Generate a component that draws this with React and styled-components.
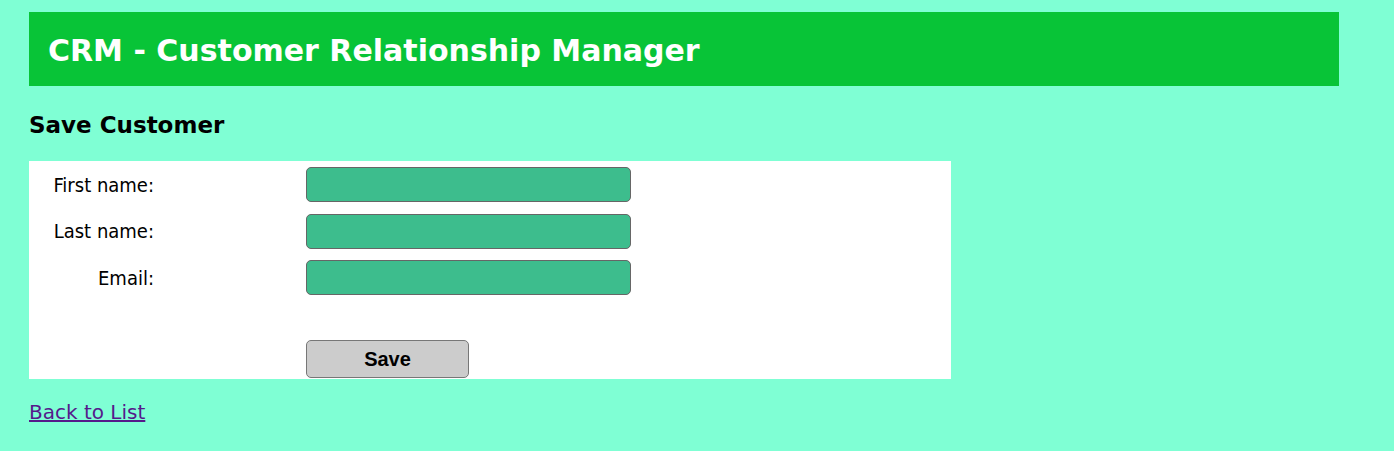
import React from "react";
import styled, { createGlobalStyle } from "styled-components";

const GlobalStyle = createGlobalStyle`
  html, body {
    margin: 0;
    background: #7fffd4;
  }
  body {
    padding: 12px 55px 0 29px;
    font-family: "DejaVu Sans", Verdana, sans-serif;
  }
`;

const fields = [
  { label: "First name:", name: "firstName" },
  { label: "Last name:", name: "lastName" },
  { label: "Email:", name: "email" },
];

const App = () => {
  return (
    <>
      <GlobalStyle />
      <Wrapper>
        <Header>
          <HeaderTitle>CRM - Customer Relationship Manager</HeaderTitle>
        </Header>
        <PageTitle>Save Customer</PageTitle>
        <FormBox>
          {fields.map((f) => (
            <FormRow key={f.name}>
              <FieldLabel>{f.label}</FieldLabel>
              <FieldInput type="text" name={f.name} />
            </FormRow>
          ))}
          <ButtonRow>
            <span />
            <SaveButton type="submit">Save</SaveButton>
          </ButtonRow>
        </FormBox>
        <BackLink href="#">Back to List</BackLink>
      </Wrapper>
    </>
  );
};

export default App;

const Wrapper = styled.div`
  width: 1310px;
`;

const Header = styled.div`
  display: flex;
  align-items: center;
  height: 74px;
  padding-left: 19px;
  background: #08c437;
`;

const HeaderTitle = styled.h1`
  margin: 0 0 -2px;
  color: #fff;
  font-size: 30px;
  font-weight: bold;
`;

const PageTitle = styled.h3`
  height: 28px;
  margin: 25px 0 22px;
  font-size: 23px;
  line-height: 28px;
  font-weight: bold;
  color: #000;
`;

const FormBox = styled.div`
  width: 922px;
  height: 218px;
  padding-top: 6px;
  box-sizing: border-box;
  background: #fff;
`;

const FormRow = styled.div`
  display: grid;
  grid-template-columns: 125px 325px;
  column-gap: 152px;
  align-items: center;
  height: 35px;
  margin-bottom: 11.5px;
`;

const ButtonRow = styled(FormRow)`
  margin-top: 45px;
  height: 38px;
  margin-bottom: 0;
`;

const FieldLabel = styled.label`
  text-align: right;
  font-family: "DejaVu Sans Condensed", Tahoma, sans-serif;
  font-size: 20px;
  color: #000;
`;

const FieldInput = styled.input`
  box-sizing: border-box;
  width: 325px;
  height: 35px;
  border: 1px solid #666;
  border-radius: 5px;
  background: #3dbd8d;
`;

const SaveButton = styled.button`
  box-sizing: border-box;
  width: 163px;
  height: 38px;
  border: 1px solid #777;
  border-radius: 5px;
  background: #ccc;
  font-family: "Liberation Sans", Arial, sans-serif;
  font-size: 20px;
  font-weight: bold;
  color: #000;
`;

const BackLink = styled.a`
  display: inline-block;
  margin-top: 21px;
  font-size: 20px;
  color: #551a8b;
`;
